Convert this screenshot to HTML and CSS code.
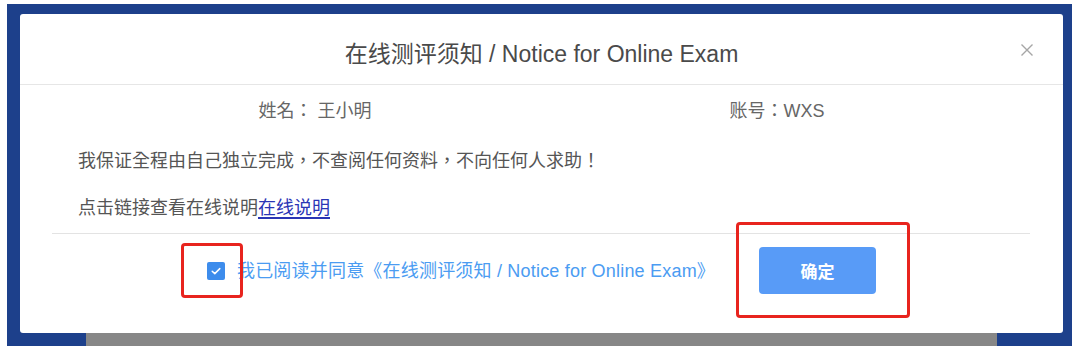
FILE: index.html
```html
<!DOCTYPE html>
<html lang="zh-CN">
<head>
<meta charset="utf-8">
<title>在线测评须知</title>
<link rel="stylesheet" href="styles.css">
</head>
<body>
<div class="frame">
  <div class="dialog">
    <div class="header">
      <span></span>
      <h1 class="title">在线测评须知 / Notice for Online Exam</h1>
      <button class="close" aria-label="关闭">
        <svg width="14" height="14" viewBox="0 0 14 14"><path d="M1.5 1.5 L12.5 12.5 M12.5 1.5 L1.5 12.5" stroke="#a6a6a6" stroke-width="1.4" fill="none"/></svg>
      </button>
    </div>
    <div class="info">
      <div class="info-item">姓名： 王小明</div>
      <div class="info-item">账号：WXS</div>
    </div>
    <p class="line first">我保证全程由自己独立完成，不查阅任何资料，不向任何人求助！</p>
    <p class="line second">点击链接查看在线说明<a class="link" href="#">在线说明</a></p>
    <div class="divider"></div>
    <div class="footer">
      <label class="agree">
        <span class="checkbox">
          <svg width="12" height="10" viewBox="0 0 12 10"><path d="M2.2 5.2 L4.8 7.6 L9.8 2.6" stroke="#fff" stroke-width="1.5" fill="none" stroke-linecap="round" stroke-linejoin="round"/></svg>
        </span>
        <span class="agree-text">我已阅读并同意《在线测评须知 / Notice for Online Exam》</span>
      </label>
      <button class="confirm">确定</button>
    </div>
    <div class="mark mark-check"></div>
    <div class="mark mark-btn"></div>
  </div>
  <div class="shade"></div>
</div>
</body>
</html>
```
FILE: styles.css
```css
* { box-sizing: border-box; }
html, body { margin: 0; padding: 0; background: #ffffff; }
body {
  font-family: "Liberation Sans", "Noto Sans CJK TC", "Noto Sans CJK SC", sans-serif;
  font-feature-settings: "locl" 0;
  width: 1080px;
  height: 353px;
  overflow: hidden;
  text-spacing-trim: space-all;
}
.frame {
  margin: 4px 0 0 7px;
  width: 1065px;
  height: 342px;
  background: #1d408b;
  padding: 10px 9px 0 13px;
  display: flex;
  flex-direction: column;
}
.dialog {
  position: relative;
  width: 1043px;
  height: 319px;
  background: #ffffff;
  border-radius: 3px;
}
.header {
  height: 71px;
  border-bottom: 1px solid #e6e6e6;
  display: grid;
  grid-template-columns: 1fr auto 1fr;
  align-items: start;
  padding-top: 25px;
}
.title {
  margin: 0;
  font-weight: normal;
  font-size: 23px;
  line-height: 30px;
  color: #4a4a4a;
  white-space: nowrap;
}
.close {
  justify-self: end;
  margin: 4px 29px 0 0;
  padding: 0;
  border: 0;
  background: none;
  width: 14px;
  height: 14px;
  display: flex;
}
.info {
  display: grid;
  grid-template-columns: 1fr 1fr;
  margin-top: 13px;
  padding: 0 55px 0 64px;
  font-size: 18px;
  line-height: 26px;
  color: #666666;
}
.info-item { text-align: center; }
.line {
  margin: 0;
  padding-left: 58px;
  font-size: 18px;
  line-height: 26px;
  color: #555555;
}
.line.first { margin-top: 24px; }
.line.second { margin-top: 21px; }
.link {
  color: #2a35b5;
  text-decoration: underline;
  text-decoration-thickness: 2px;
  text-underline-offset: 3px;
}
.divider {
  margin: 12px 33px 0 32px;
  height: 1px;
  background: #e3e3e3;
}
.footer {
  padding-top: 13px;
  display: flex;
  justify-content: center;
  align-items: center;
  gap: 44px;
}
.agree {
  display: flex;
  align-items: center;
  gap: 12px;
}
.checkbox {
  width: 18px;
  height: 18px;
  border-radius: 2px;
  background: #3d8cec;
  display: flex;
  align-items: center;
  justify-content: center;
}
.agree-text {
  font-size: 18px;
  line-height: 26px;
  letter-spacing: 0.2px;
  color: #4b9cf2;
  white-space: nowrap;
}
.confirm {
  width: 117px;
  height: 47px;
  border: 0;
  border-radius: 4px;
  background: #589bf7;
  color: #ffffff;
  font-family: "Noto Sans CJK SC", sans-serif;
  font-size: 17px;
  font-weight: bold;
}
.mark {
  position: absolute;
  border: 3px solid #e8241e;
  border-radius: 4px;
}
.mark-check { left: 161px; top: 229px; width: 62px; height: 55px; }
.mark-btn { left: 716px; top: 208px; width: 174px; height: 96px; }
.shade {
  margin-left: 66px;
  width: 911px;
  height: 13px;
  background: #878787;
}
```
